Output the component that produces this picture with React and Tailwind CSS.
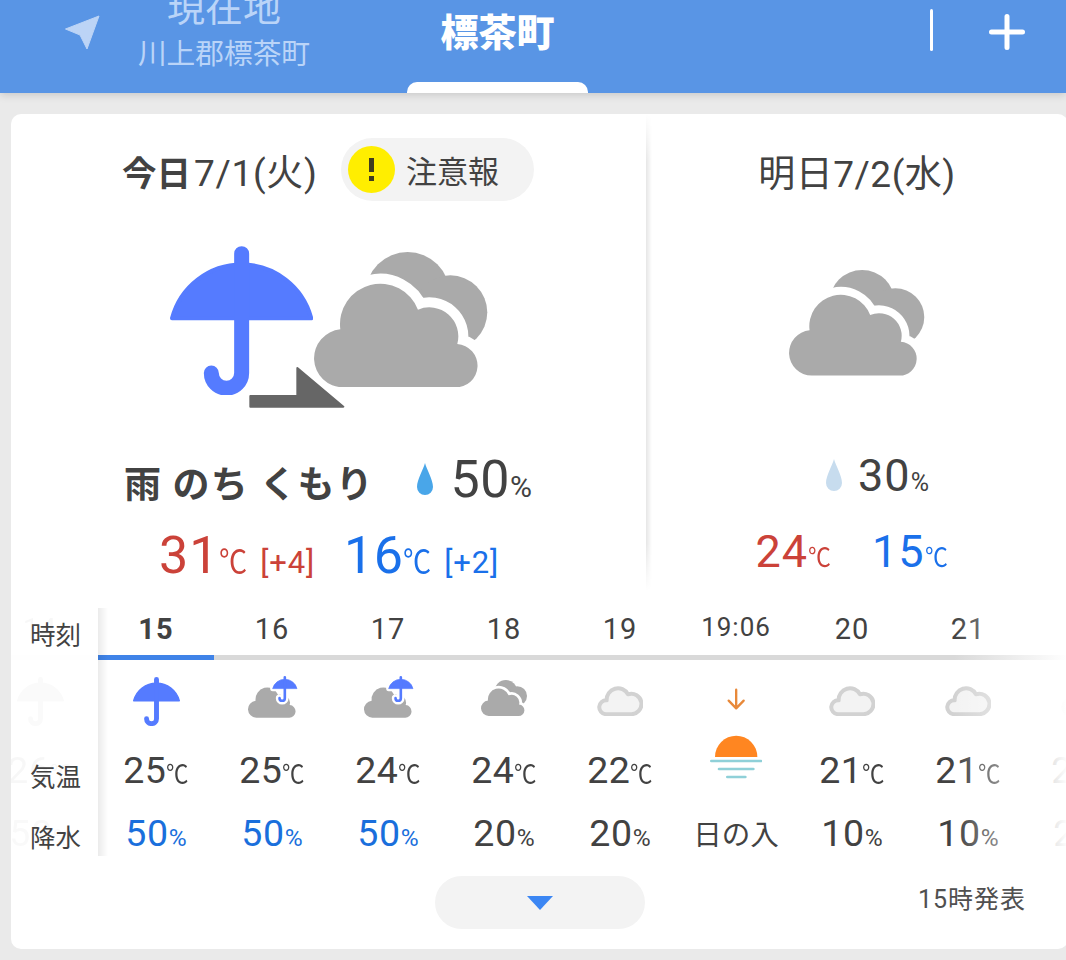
import clsx from "clsx";

const hours = [
  { time: "14", icon: "rain", temp: "26", rain: "50", past: true },
  { time: "15", icon: "rain", temp: "25", rain: "50", current: true },
  { time: "16", icon: "cloudRain", temp: "25", rain: "50" },
  { time: "17", icon: "cloudRain", temp: "24", rain: "50" },
  { time: "18", icon: "cloudy", temp: "24", rain: "20" },
  { time: "19", icon: "light", temp: "22", rain: "20" },
  { time: "19:06", sunset: true },
  { time: "20", icon: "light", temp: "21", rain: "10" },
  { time: "21", icon: "light", temp: "21", rain: "10" },
  { time: "22", icon: "light", temp: "21", rain: "20" },
];

const FRONT_CLOUD =
  "M578 470A87.2 87.2 0 0 1 570 296A121 121 0 0 1 803 237A87 87 0 0 1 921 340A65.100 65.100 0 0 1 914 470Z";

function UmbrellaShape() {
  return (
    <>
      <path d="M66 266A216 216 0 0 1 484 266Z" fill="#557bff" stroke="#557bff" strokeWidth="12" strokeLinejoin="round" />
      <path d="M275 72V430A45.5 45.5 0 0 1 184 430" fill="none" stroke="#557bff" strokeWidth="45" strokeLinecap="round" />
    </>
  );
}

function Umbrella({ className }) {
  return (
    <svg viewBox="60 49 430 448" className={className}>
      <UmbrellaShape />
    </svg>
  );
}

function Clouds({ className }) {
  return (
    <svg viewBox="491 64 520 406" className={className}>
      <g fill="#aaaaaa">
        <circle cx="772" cy="190" r="126" />
        <circle cx="900" cy="245" r="111" />
        <path d={FRONT_CLOUD} stroke="#fff" strokeWidth="60" />
        <path d={FRONT_CLOUD} />
      </g>
    </svg>
  );
}

function CloudRain() {
  return (
    <svg viewBox="742 222 156 132" className="ml-[2px] h-[44px] w-[52px]">
      <path d={FRONT_CLOUD} fill="#aaaaaa" transform="translate(602 213.2) scale(.291)" />
      <g transform="translate(807.5 216.4) scale(.1744)">
        <path d="M66 266A216 216 0 0 1 484 266Z" fill="#fff" stroke="#fff" strokeWidth="88" strokeLinejoin="round" />
        <path d="M275 72V430A45.5 45.5 0 0 1 184 430" fill="#fff" stroke="#fff" strokeWidth="128" strokeLinecap="round" />
        <UmbrellaShape />
      </g>
    </svg>
  );
}

function LightCloud() {
  return (
    <svg viewBox="771 257 138 94" className="mt-[10px] h-[31.3px] w-[46px]">
      <path
        d="M797 344.500A20.800 20.800 0 0 1 800 303A34 34 0 0 1 864 285A30.600 30.600 0 1 1 872 344.500Z"
        fill="#f3f3f3"
        stroke="#d2d2d2"
        strokeWidth="12"
        strokeLinejoin="round"
      />
    </svg>
  );
}

function Sunset() {
  return (
    <svg viewBox="90 265 158 275" className="h-[91.7px] w-[52.7px]" fill="none" strokeLinecap="round">
      <path d="M168.500 270V325M146 303L168.500 326L191 303" stroke="#e8893a" strokeWidth="7" strokeLinejoin="round" />
      <path d="M105 472A63.500 64 0 0 1 232 472Z" fill="#ff8621" />
      <path d="M94 484H243M117 508H220M142 532H196" stroke="#8fd0d8" strokeWidth="8" />
    </svg>
  );
}

function Drop({ className }) {
  return (
    <svg viewBox="0 0 16 32" className={className} fill="currentColor">
      <path d="M8 0C9.500 6 16 16.500 16 24A8 8 0 0 1 0 24C0 16.500 6.500 6 8 0Z" />
    </svg>
  );
}

function Celsius({ className }) {
  return <span className={clsx("-mr-[3px] inline-block origin-left scale-x-88 tracking-normal", className)}>℃</span>;
}

function HourIcon({ icon }) {
  if (icon === "rain") return <Umbrella className="mt-[2px] h-[49px] w-[47px]" />;
  if (icon === "cloudRain") return <CloudRain />;
  if (icon === "cloudy") return <Clouds className="mt-[5px] h-[36px] w-[46px]" />;
  return <LightCloud />;
}

function Hour({ hour }) {
  return (
    <div className={clsx("flex w-[116px] shrink-0 flex-col items-center", hour.past && "grayscale")}>
      <div
        className={clsx(
          "h-[47px] pt-[4px] leading-[34px] tracking-[1px]",
          hour.current && "font-bold",
          hour.sunset ? "-mt-[2px] mb-[2px] text-[26px]" : "text-[29px]"
        )}
      >
        {hour.time}
      </div>
      <div className={clsx("h-[5px] w-full", hour.current ? "bg-[#3f83e8]" : "bg-[#d9d9d9]")} />
      {hour.sunset ? (
        <>
          <div className="h-[144px] pt-[28px]">
            <Sunset />
          </div>
          <div className="pt-[8px] text-[28.5px] leading-[48px]">日の入</div>
        </>
      ) : (
        <>
          <div className="flex h-[85px] items-start pt-[15px]">
            <HourIcon icon={hour.icon} />
          </div>
          <div className="flex h-[63px] items-baseline text-[37.5px] leading-[51px] tracking-[0.5px]">
            {hour.temp}
            <Celsius className="text-[25.5px]" />
          </div>
          <div
            className={clsx(
              "flex items-baseline text-[37.5px] leading-[51px] tracking-[0.7px]",
              hour.rain === "50" && "text-[#1a6fdc]"
            )}
          >
            {hour.rain}
            <span className="text-[24.5px] tracking-normal">%</span>
          </div>
        </>
      )}
    </div>
  );
}

function Header() {
  return (
    <header className="relative z-10 flex h-[93px] bg-[#5995e5] shadow-[0_2px_8px_rgba(0,0,0,0.15)]">
      <svg viewBox="65 15 35 35" className="mt-[15px] ml-[65px] h-[35px] w-[35px] shrink-0">
        <path d="M99 16L65.500 29L80 35L87 49Z" fill="#bcd4f6" stroke="#bcd4f6" strokeLinejoin="round" />
      </svg>
      <div className="ml-[14px] flex w-[220px] flex-col items-center whitespace-nowrap text-[#bad4f8]">
        <div className="-mt-[12px] text-[38px] leading-[40px]">現在地</div>
        <div className="mt-[11px] text-[28.7px] leading-[30px]">川上郡標茶町</div>
      </div>
      <div className="ml-[73px] flex w-[181px] flex-col items-center justify-between">
        <div className="mt-[13px] text-[38px] leading-[40px] font-black text-white">標茶町</div>
        <div className="h-[11px] w-full rounded-t-[10px] bg-white" />
      </div>
      <div className="mt-[9px] ml-[342px] h-[42px] w-[3px] rounded-full bg-white" />
      <svg viewBox="0 0 36 36" className="mt-[14px] ml-[56px] h-[36px] w-[36px] shrink-0">
        <path d="M18 2.500V33.500M2.500 18H33.500" stroke="#fff" strokeWidth="5" strokeLinecap="round" />
      </svg>
    </header>
  );
}

function Today() {
  return (
    <section className="w-[635px] shrink-0">
      <div className="flex h-[111px] pt-[24px] pl-[111px]">
        <div className="flex h-[62px] items-baseline leading-[72px] whitespace-nowrap">
          <span className="text-[34.5px] font-bold">今日</span>
          <span className="ml-[3px] text-[37px] tracking-[0.7px]">7/1(火)</span>
        </div>
        <div className="ml-auto mr-[112px] flex h-[63px] w-[193px] items-center rounded-full bg-[#f3f3f3] pl-[7px]">
          <div className="flex h-[47px] w-[47px] flex-col items-center justify-center gap-[4px] rounded-full bg-[#ffee00]">
            <div className="h-[14px] w-[5px] bg-[#403c20]" />
            <div className="h-[5px] w-[5px] bg-[#403c20]" />
          </div>
          <span className="ml-[11px] pt-[7px] text-[31px] leading-[40px]">注意報</span>
        </div>
      </div>
      <div className="relative flex h-[225px] pt-[21px] pl-[159px]">
        <Umbrella className="h-[149.300px] w-[143.300px]" />
        <Clouds className="mt-[6px] ml-px h-[135.300px] w-[173.300px]" />
        <svg viewBox="298 408 288 128" className="absolute top-[141px] left-[238px] h-[42.7px] w-[96px]">
          <path d="M302 498H443V414L581 530H302Z" fill="#666" stroke="#666" strokeWidth="6" strokeLinejoin="round" />
        </svg>
      </div>
      <div className="flex h-[76px] pl-[113px]">
        <span className="text-[37px] leading-[71px] font-bold tracking-[1.2px] whitespace-nowrap">雨 のち くもり</span>
        <Drop className="mt-[13px] ml-auto h-[32px] w-[16px] text-[#49a6e9]" />
        <div className="mr-[114px] ml-[18px] flex items-baseline text-[52px] leading-[60px] tracking-[0.5px]">
          50<span className="text-[30px] tracking-normal">%</span>
        </div>
      </div>
      <div className="flex pl-[148px] text-[52px] leading-[60px]">
        <div className="flex w-[185px] items-baseline tracking-[1px] text-[#cb4239]">
          31
          <Celsius className="text-[32px]" />
          <span className="ml-auto mr-[29px] text-[31px] tracking-[0.8px]">[+4]</span>
        </div>
        <div className="flex w-[155px] items-baseline tracking-[0.5px] text-[#1a70ea]">
          16
          <Celsius className="text-[32px]" />
          <span className="ml-auto text-[31px] tracking-[0.8px]">[+2]</span>
        </div>
      </div>
    </section>
  );
}

function Tomorrow() {
  return (
    <section className="flex w-[410px] flex-col items-center">
      <div className="mt-[26px] text-[37px] leading-[70px] tracking-[0.5px] whitespace-nowrap">明日7/2(水)</div>
      <Clouds className="mt-[60px] h-[105.600px] w-[135.300px]" />
      <div className="mt-[69px] flex h-[77px] pl-[41px]">
        <Drop className="mt-[14px] h-[32px] w-[16px] text-[#c7dcee]" />
        <div className="ml-[16px] flex items-baseline text-[45px] leading-[62px] tracking-[1px]">
          30<span className="text-[25px] tracking-normal">%</span>
        </div>
      </div>
      <div className="flex gap-[41px] pr-[11px] text-[45px] leading-[60px] tracking-[1px]">
        <div className="flex items-baseline text-[#cb4239]">
          24
          <Celsius className="text-[26px]" />
        </div>
        <div className="flex items-baseline text-[#1a70ea]">
          15
          <Celsius className="text-[26px]" />
        </div>
      </div>
    </section>
  );
}

function Hourly() {
  return (
    <div className="relative mt-[17px] h-[248px] overflow-hidden">
      <div className="-ml-[29px] flex">
        {hours.map((hour) => (
          <Hour key={hour.time} hour={hour} />
        ))}
      </div>
      <div className="absolute inset-y-0 left-0 w-[87px] bg-white/96 pl-[19px] text-[25.500px] leading-[34px] whitespace-nowrap">
        <div className="pt-[10px]">時刻</div>
        <div className="pt-[108px]">気温</div>
        <div className="pt-[27px]">降水</div>
      </div>
      <div className="absolute inset-y-0 left-[87px] w-[10px] bg-linear-to-r from-black/8 to-transparent" />
      <div className="absolute inset-y-0 right-0 w-[114px] bg-linear-to-r from-transparent to-white" />
    </div>
  );
}

export default function App() {
  return (
    <main className="h-[960px] w-[1066px] overflow-hidden bg-[#eaeaea] font-['Roboto','Noto_Sans_CJK_JP',sans-serif] text-[#424242]">
      <Header />
      <div className="mt-[21px] ml-[11px] h-[835px] w-[1057px] overflow-hidden rounded-[10px] bg-white">
        <div className="flex h-[477px]">
          <Today />
          <div className="h-[477px] w-[6px] shrink-0 bg-linear-to-r from-black/10 to-transparent mask-y-from-90% mask-y-to-100%" />
          <Tomorrow />
        </div>
        <Hourly />
        <div className="flex pr-[42px]">
          <button type="button" className="mt-[20px] ml-[424px] flex h-[53px] w-[210px] items-center justify-center rounded-full bg-[#f3f3f3]">
            <svg viewBox="0 0 26 14" className="mt-px h-[14px] w-[26px]">
              <path d="M0 0H26L13 14Z" fill="#3b86f3" />
            </svg>
          </button>
          <div className="mt-[24px] ml-auto text-[25px] leading-[40px] tracking-[1px] text-[#505050]">15時発表</div>
        </div>
      </div>
    </main>
  );
}
